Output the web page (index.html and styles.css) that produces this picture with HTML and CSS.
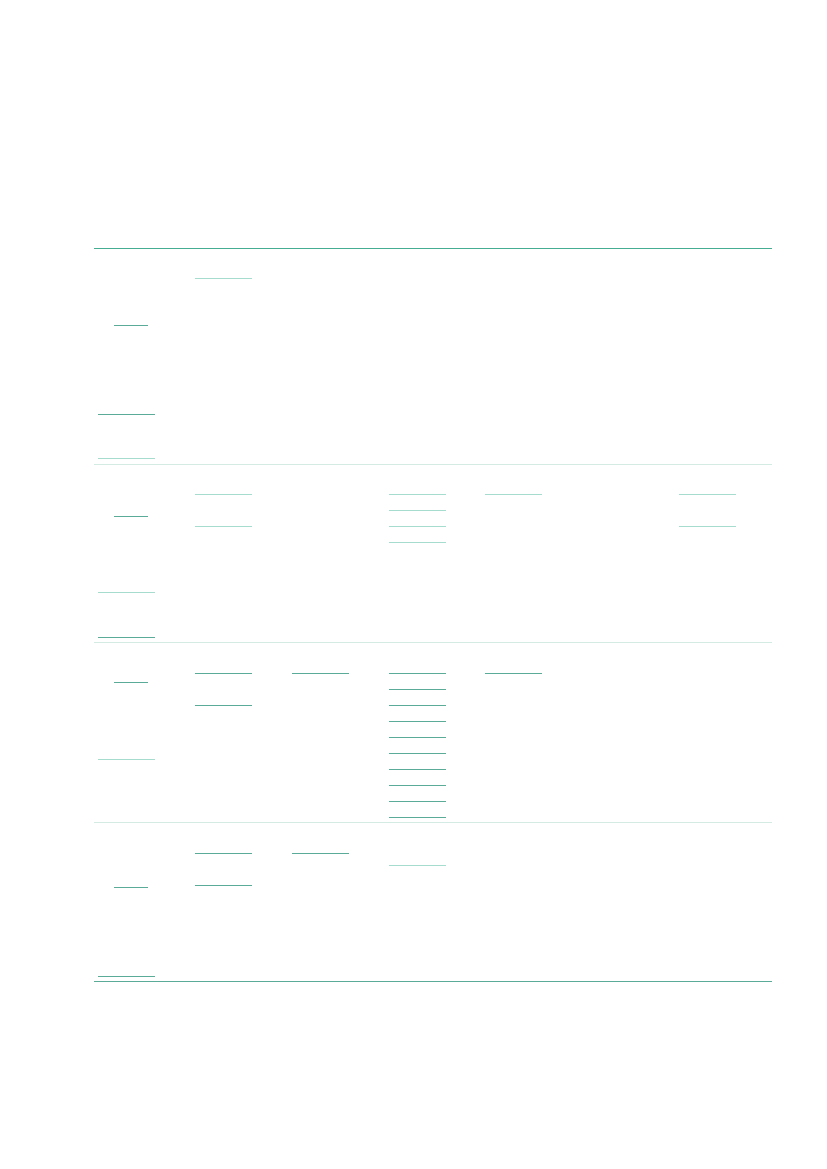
FILE: index.html
```html
<!DOCTYPE html>
<html>
<head>
<meta charset="utf-8">
<link rel="stylesheet" href="styles.css">
</head>
<body>
<div class="page">
  <div class="table">
    <div class="row r-first">
      <div class="cell pt76"><span class="ln s dk"></span><span class="ln dk m88"></span><span class="ln lt m43"></span></div>
      <div class="cell pt29"><span class="ln lt"></span></div>
      <div class="cell"></div>
      <div class="cell"></div>
      <div class="cell"></div>
      <div class="cell"></div>
      <div class="cell"></div>
    </div>
    <div class="row">
      <div class="cell pt51"><span class="ln s dk"></span><span class="ln lt m75"></span><span class="ln dk m44"></span></div>
      <div class="cell pt29"><span class="ln lt"></span><span class="ln lt m31"></span></div>
      <div class="cell"></div>
      <div class="cell pt29 stack"><span class="ln lt"></span><span class="ln lt"></span><span class="ln lt"></span><span class="ln lt"></span></div>
      <div class="cell pt29"><span class="ln lt"></span></div>
      <div class="cell"></div>
      <div class="cell pt29"><span class="ln lt"></span><span class="ln lt m31"></span></div>
    </div>
    <div class="row">
      <div class="cell pt39"><span class="ln s dk"></span><span class="ln lt m76"></span></div>
      <div class="cell pt30"><span class="ln dk"></span><span class="ln dk m31"></span></div>
      <div class="cell pt30"><span class="ln dk"></span></div>
      <div class="cell pt30 stack"><span class="ln dk"></span><span class="ln dk"></span><span class="ln dk"></span><span class="ln dk"></span><span class="ln dk"></span><span class="ln dk"></span><span class="ln dk"></span><span class="ln dk"></span><span class="ln dk"></span><span class="ln dk"></span></div>
      <div class="cell pt30"><span class="ln dk"></span></div>
      <div class="cell"></div>
      <div class="cell"></div>
    </div>
    <div class="row r-last">
      <div class="cell pt64"><span class="ln s dk"></span><span class="ln dk m88"></span></div>
      <div class="cell pt30"><span class="ln dk"></span><span class="ln dk m31"></span></div>
      <div class="cell pt30"><span class="ln dk"></span></div>
      <div class="cell pt42"><span class="ln lt"></span></div>
      <div class="cell"></div>
      <div class="cell"></div>
      <div class="cell"></div>
    </div>
  </div>
</div>
</body>
</html>
```
FILE: styles.css
```css
html, body {
  margin: 0;
  padding: 0;
  background: #ffffff;
  font-family: "Liberation Sans", Arial, sans-serif;
}

.page {
  padding: 248px 0 0 94px;
}

.table {
  width: 678px;
  border-top: 1px solid #45ae92;
}

.row {
  display: grid;
  grid-template-columns: repeat(7, 1fr);
  border-bottom: 1px solid #d4ebe4;
}

.row.r-last {
  border-bottom: 1px solid #5aab97;
}

.cell {
  display: flex;
  flex-direction: column;
  align-items: flex-start;
  padding-bottom: 4px;
}

.r-first .cell {
  padding-bottom: 5px;
}

.stack {
  gap: 15px;
}

.ln {
  display: block;
  height: 0;
  width: 57px;
  margin-left: 4px;
  border-top: 1px solid #5aab97;
}

.ln.s {
  width: 34px;
  margin-left: 20px;
}

.ln.dk { border-top-color: #5aab97; }
.ln.lt { border-top-color: #a6dccd; }

.pt29 { padding-top: 29px; }
.pt30 { padding-top: 30px; }
.pt39 { padding-top: 39px; }
.pt42 { padding-top: 42px; }
.pt51 { padding-top: 51px; }
.pt64 { padding-top: 64px; }
.pt76 { padding-top: 76px; }

.m31 { margin-top: 31px; }
.m43 { margin-top: 43px; }
.m44 { margin-top: 44px; }
.m75 { margin-top: 75px; }
.m76 { margin-top: 76px; }
.m88 { margin-top: 88px; }
```
